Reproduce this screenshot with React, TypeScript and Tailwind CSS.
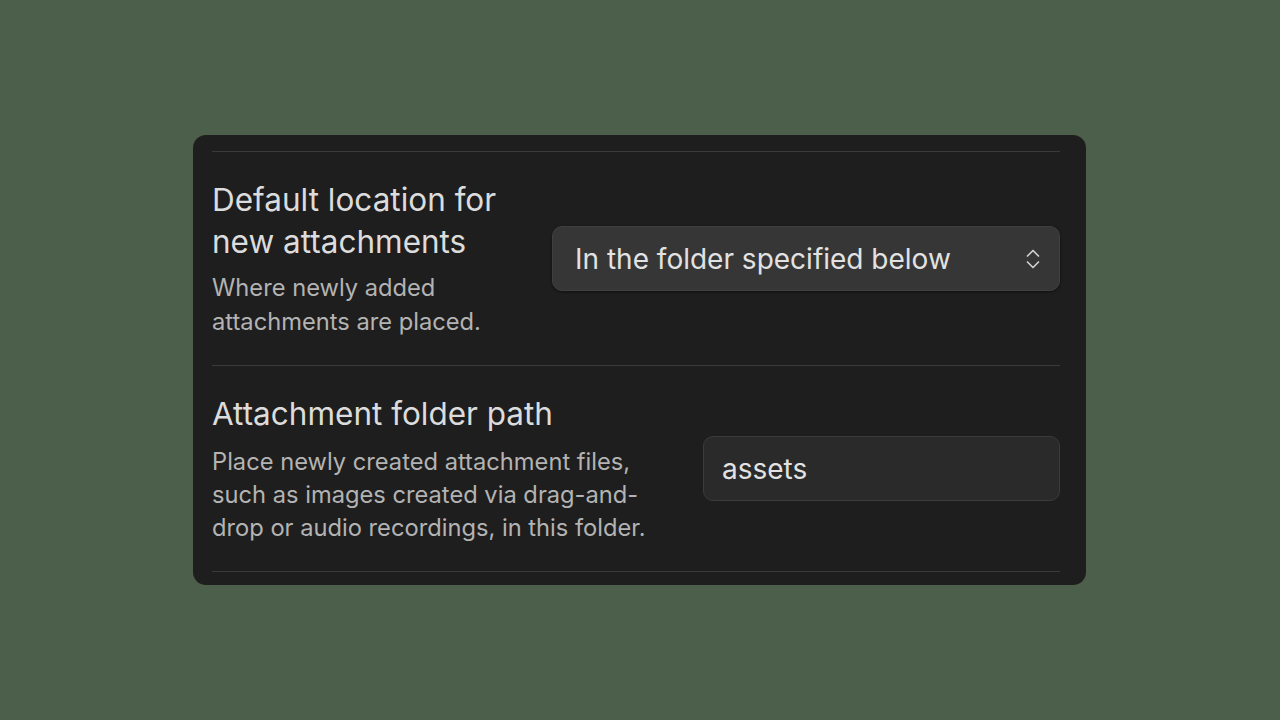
import React from "react";

const ChevronsUpDown = ({ className = "w-4 h-5" }) => (
  <svg className={className} viewBox="0 0 14 22" fill="none" stroke="currentColor" strokeWidth="1.7" strokeLinecap="round" strokeLinejoin="round">
    <path d="M1.5 8L7 2.5L12.5 8" />
    <path d="M1.5 14L7 19.5L12.5 14" />
  </svg>
);

const App: React.FC = () => {
  return (
    <div className="w-[1280px] h-[720px] bg-[#4b5f4a] pt-[135px] pl-[193px] font-['Inter','Noto_Sans',sans-serif]">
      <div className="w-[893px] bg-[#1e1e1e] rounded-[13px] pl-[19px] pr-[26px] pt-[16px] pb-[13px]">
        <div className="border-t border-[#3a3a3a]" />

        {/* Default location */}
        <div className="flex items-center gap-[30px] h-[214px] border-b border-[#3a3a3a]">
          <div className="flex-1 min-w-0">
            <div className="text-[31.5px] leading-[42px] text-[#dcdcdc]">Default location for new attachments</div>
            <div className="text-[23.7px] leading-[34px] text-[#b3b3b3] mt-[8px]">Where newly added attachments are placed.</div>
          </div>
          <button
            type="button"
            className="w-[508px] h-[65px] shrink-0 flex items-center justify-between pl-[22px] pr-[19px] rounded-[10px] bg-[#363636] border border-[#404040] shadow-[0_1px_3px_rgba(0,0,0,0.5)] text-[28px] text-[#e2e2e2]"
          >
            <span>In the folder specified below</span>
            <ChevronsUpDown className="w-[14px] h-[22px] text-[#cfcfcf]" />
          </button>
        </div>

        {/* Attachment folder path */}
        <div className="flex items-center gap-[30px] h-[206px] border-b border-[#3a3a3a]">
          <div className="flex-1 min-w-0">
            <div className="text-[31.5px] leading-[40px] text-[#dcdcdc]">Attachment folder path</div>
            <div className="text-[23.7px] leading-[33px] text-[#b3b3b3] mt-[11px]">
              Place newly created attachment files, such as images created via drag-and-drop or audio recordings, in this folder.
            </div>
          </div>
          <div className="w-[357px] h-[65px] shrink-0 flex items-center pl-[18px] rounded-[10px] bg-[#2a2a2a] border border-[#3b3b3b] text-[28px] text-[#e2e2e2]">
            assets
          </div>
        </div>
      </div>
    </div>
  );
};

export default App;
